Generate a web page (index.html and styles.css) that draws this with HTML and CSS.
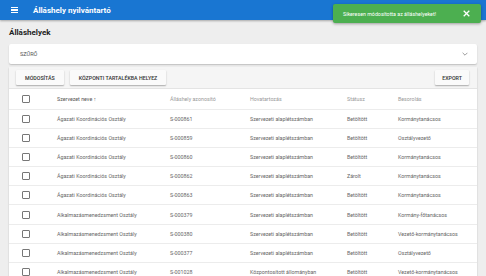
FILE: index.html
```html
<!DOCTYPE html>
<html lang="hu">

<head>
    <meta charset="UTF-8">
    <meta name="viewport" content="width=device-width, initial-scale=1.0">
    <title>Álláshely nyilvántartó</title>
    <link rel="stylesheet" href="styles.css">
</head>

<body>
    <header class="appbar">
        <div class="menu-icon"><span></span><span></span><span></span></div>
        <div class="app-title">Álláshely nyilvántartó</div>
        <div class="appbar-icons">
            <span class="round-icon"></span>
            <span class="round-icon"></span>
        </div>
    </header>

    <div class="snackbar">
        <span>Sikeresen módosította az álláshelyeket!</span>
        <svg class="close-icon" viewBox="0 0 10 10" width="7" height="7">
            <path d="M1 1 L9 9 M9 1 L1 9" stroke="#fff" stroke-width="1.8" fill="none" />
        </svg>
    </div>

    <main class="content">
        <h1 class="page-title">Álláshelyek</h1>

        <section class="filter-card">
            <span class="filter-label">SZŰRŐ</span>
            <svg class="chevron" viewBox="0 0 10 6" width="6" height="4">
                <path d="M1 1 L5 5 L9 1" stroke="#777" stroke-width="1.2" fill="none" />
            </svg>
        </section>

        <section class="table-card">
            <div class="toolbar">
                <button class="btn">MÓDOSÍTÁS</button>
                <button class="btn">KÖZPONTI TARTALÉKBA HELYEZ</button>
                <button class="btn btn-right">EXPORT</button>
            </div>

            <div class="row head">
                <div class="cell check"><span class="checkbox"></span></div>
                <div class="cell name sorted">Szervezet neve <span class="sort">&#8593;</span></div>
                <div class="cell ident">Álláshely azonosító</div>
                <div class="cell belong">Hovatartozás</div>
                <div class="cell status">Státusz</div>
                <div class="cell grade">Besorolás</div>
            </div>

            <div id="rows"></div>
        </section>
    </main>

    <script>
        const data = [
            ['Ágazati Koordinációs Osztály', 'S-000861', 'Szervezeti alaplétszámban', 'Betöltött', 'Kormánytanácsos'],
            ['Ágazati Koordinációs Osztály', 'S-000859', 'Szervezeti alaplétszámban', 'Betöltött', 'Osztályvezető'],
            ['Ágazati Koordinációs Osztály', 'S-000860', 'Szervezeti alaplétszámban', 'Betöltött', 'Kormánytanácsos'],
            ['Ágazati Koordinációs Osztály', 'S-000862', 'Szervezeti alaplétszámban', 'Zárolt', 'Kormánytanácsos'],
            ['Ágazati Koordinációs Osztály', 'S-000863', 'Szervezeti alaplétszámban', 'Betöltött', 'Kormánytanácsos'],
            ['Alkalmazásmenedzsment Osztály', 'S-000379', 'Szervezeti alaplétszámban', 'Betöltött', 'Kormány-főtanácsos'],
            ['Alkalmazásmenedzsment Osztály', 'S-000380', 'Szervezeti alaplétszámban', 'Betöltött', 'Vezető-kormánytanácsos'],
            ['Alkalmazásmenedzsment Osztály', 'S-000377', 'Szervezeti alaplétszámban', 'Betöltött', 'Osztályvezető'],
            ['Alkalmazásmenedzsment Osztály', 'S-001028', 'Központosított állományban', 'Betöltött', 'Vezető-kormánytanácsos']
        ];
        const cls = ['name', 'ident', 'belong', 'status', 'grade'];
        const rowsElement = document.getElementById('rows');

        data.forEach(function (item) {
            const row = document.createElement('div');
            row.className = 'row';
            let html = '<div class="cell check"><span class="checkbox"></span></div>';
            item.forEach(function (value, i) {
                html += '<div class="cell ' + cls[i] + '">' + value + '</div>';
            });
            row.innerHTML = html;
            rowsElement.appendChild(row);
        });
    </script>
</body>

</html>
```

FILE: styles.css
```css
body {
    margin: 0;
    height: 276px;
    overflow: hidden;
    font-family: 'Roboto', 'Liberation Sans', sans-serif;
    background-color: #eeeeee;
    color: #333;
}

.appbar {
    display: flex;
    align-items: center;
    height: 20px;
    background-color: #1976d2;
    color: white;
    box-shadow: 0 1px 2px rgba(0, 0, 0, 0.3);
}

.menu-icon {
    display: flex;
    flex-direction: column;
    gap: 1.3px;
    width: 7px;
    margin-left: 11px;
    margin-right: 15px;
}

.menu-icon span {
    height: 1.2px;
    background-color: white;
}

.app-title {
    font-size: 8px;
    font-weight: 700;
}

.appbar-icons {
    display: flex;
    gap: 14px;
    margin-left: auto;
    margin-right: 82px;
    margin-top: -4px;
}

.round-icon {
    width: 7px;
    height: 7px;
    border-radius: 50%;
    background-color: white;
}

.snackbar {
    position: absolute;
    top: 4px;
    left: 333px;
    width: 148px;
    height: 19px;
    display: flex;
    align-items: center;
    justify-content: space-between;
    box-sizing: border-box;
    padding: 0 11px 0 10px;
    background-color: #4caf50;
    color: white;
    font-size: 5.3px;
    border-radius: 2px;
    box-shadow: 0 1px 3px rgba(0, 0, 0, 0.35);
}

.content {
    padding: 0 9px;
}

.page-title {
    margin: 0;
    height: 23px;
    padding-top: 1px;
    display: flex;
    align-items: center;
    font-size: 8px;
    font-weight: 700;
    color: #222;
}

.filter-card {
    display: flex;
    align-items: center;
    justify-content: space-between;
    height: 20px;
    padding: 0 9px 0 11px;
    background-color: white;
    box-shadow: 0 1px 1.5px rgba(0, 0, 0, 0.2);
    border-radius: 2px;
}

.filter-label {
    font-size: 5.5px;
    color: #555;
}

.table-card {
    margin-top: 3px;
    background-color: white;
    box-shadow: 0 1px 1.5px rgba(0, 0, 0, 0.2);
}

.toolbar {
    display: flex;
    align-items: center;
    gap: 6px;
    height: 22px;
    padding: 0 8px 0 7px;
    background-color: #f5f5f5;
    border-bottom: 1px solid #e4e4e4;
    box-sizing: border-box;
}

.btn {
    height: 15px;
    padding: 0 9px;
    font-family: inherit;
    font-size: 5.3px;
    font-weight: 500;
    color: #333;
    background-color: #fafafa;
    border: none;
    border-radius: 1px;
    box-shadow: 0 1px 1.5px rgba(0, 0, 0, 0.3);
}

.btn-right {
    margin-left: auto;
    padding: 0 7px;
}

.row {
    display: flex;
    align-items: center;
    height: 19.2px;
    border-bottom: 1px solid #ececec;
    box-sizing: border-box;
    font-size: 5.3px;
    color: #666;
}

.row.head {
    height: 20.5px;
    color: #999;
}

.row.head .sorted {
    color: #555;
}

.cell {
    white-space: nowrap;
}

.check {
    box-sizing: border-box;
    width: 48px;
    padding-left: 13px;
    display: flex;
    align-items: center;
}

.checkbox {
    width: 6px;
    height: 6px;
    border: 1px solid #777;
    border-radius: 1px;
}

.name {
    width: 113px;
}

.sort {
    color: #555;
}

.ident {
    width: 80px;
}

.belong {
    width: 97px;
}

.status {
    width: 51px;
}
```
